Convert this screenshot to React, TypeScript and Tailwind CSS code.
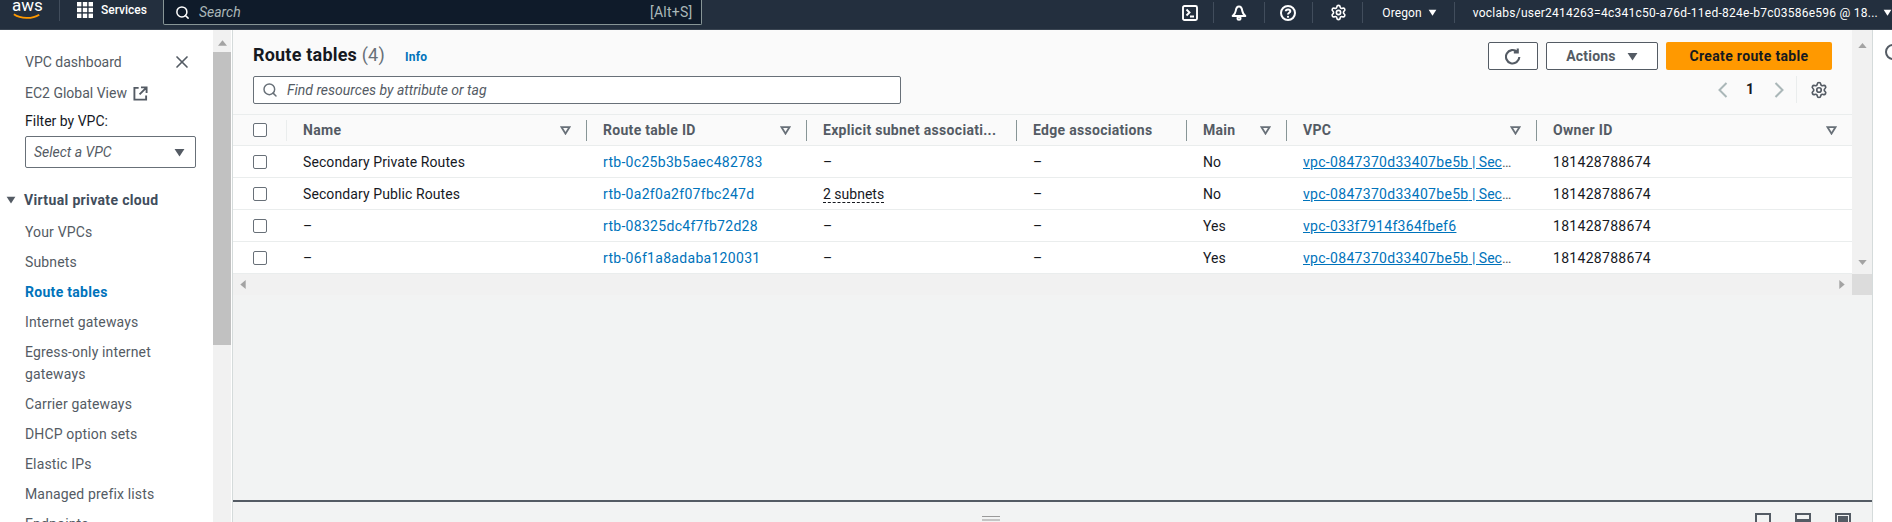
import React from "react";
import { Search, X, Settings } from "lucide-react";

const Caret = ({ className = "" }: { className?: string }) => (
  <svg viewBox="0 0 12 10" className={className} fill="currentColor"><path d="M0.5 1h11L6 9.5z" /></svg>
);
const SortIcon = () => (
  <svg viewBox="0 0 12 10" className="w-[11px] h-[9px] text-[#687078] shrink-0" fill="none" stroke="currentColor" strokeWidth="2"><path d="M1.5 1.2h9L6 8.5z" /></svg>
);
const Sep = () => <div className="w-px h-[21px] bg-[#414d5c]" />;
const Check = () => <div className="w-[14px] h-[14px] rounded-[2px] border border-[#687078] bg-white" />;

const cols = [
  { name: "Name", sort: true },
  { name: "Route table ID", sort: true },
  { name: "Explicit subnet associati...", sort: false },
  { name: "Edge associations", sort: false },
  { name: "Main", sort: true },
  { name: "VPC", sort: true },
  { name: "Owner ID", sort: true },
];
const vpcA = "vpc-0847370d33407be5b";
const rows = [
  { name: "Secondary Private Routes", id: "rtb-0c25b3b5aec482783", sub: "–", main: "No", vpc: vpcA, more: true },
  { name: "Secondary Public Routes", id: "rtb-0a2f0a2f07fbc247d", sub: "2 subnets", main: "No", vpc: vpcA, more: true },
  { name: "–", id: "rtb-08325dc4f7fb72d28", sub: "–", main: "Yes", vpc: "vpc-033f7914f364fbef6", more: false },
  { name: "–", id: "rtb-06f1a8adaba120031", sub: "–", main: "Yes", vpc: vpcA, more: true },
];
const grid = "grid grid-cols-[54px_300px_220px_210px_170px_100px_250px_315px]";
const cell = "pl-[16px] pt-[2px]";
const navItems = ["Your VPCs", "Subnets", "Route tables", "Internet gateways", "Egress-only internet gateways", "Carrier gateways", "DHCP option sets", "Elastic IPs", "Managed prefix lists", "Endpoints"];

export default function App() {
  return (
    <div className="w-[1892px] h-[522px] overflow-hidden flex flex-col bg-[#f2f3f3] text-[14px] text-[#16191f] font-['Roboto',sans-serif]">
      {/* Top bar */}
      <header className="h-[30px] shrink-0 bg-[#232f3e] border-b border-[#3a4552] flex items-start text-white text-[12px]">
        <div className="w-[59px] h-[22px] relative overflow-hidden shrink-0">
          <span className="absolute left-[12px] top-[-5px] text-[17px] leading-[20px] font-normal">aws</span>
          <svg viewBox="0 0 32 8" className="absolute left-[11px] top-[13px] w-[32px] h-[7px]" fill="none"><path d="M1 1.5C9 7 22 7 30 2" stroke="#ff9900" strokeWidth="2" /></svg>
        </div>
        <div className="w-px h-[21px] bg-[#414d5c]" />
        <svg viewBox="0 0 16 16" className="w-[16px] h-[16px] ml-[17px] mt-[2px] shrink-0" fill="#fff">
          <rect x="0" y="0" width="4.4" height="4.4" /><rect x="5.8" y="0" width="4.4" height="4.4" /><rect x="11.6" y="0" width="4.4" height="4.4" />
          <rect x="0" y="5.8" width="4.4" height="4.4" /><rect x="5.8" y="5.8" width="4.4" height="4.4" /><rect x="11.6" y="5.8" width="4.4" height="4.4" />
          <rect x="0" y="11.6" width="4.4" height="4.4" /><rect x="5.8" y="11.6" width="4.4" height="4.4" /><rect x="11.6" y="11.6" width="4.4" height="4.4" />
        </svg>
        <span className="ml-[8px] w-[62px] leading-[20px] font-medium">Services</span>
        <div className="w-[540px] h-[25px] bg-[#0f1b2a] border border-t-0 border-[#879596] rounded-b-[2px] flex items-center pl-[11px] pr-[9px] text-[#aab7b8]">
          <Search size={15} strokeWidth={2.4} className="text-white shrink-0" />
          <span className="ml-[9px] italic text-[14px] flex-1">Search</span>
          <span className="text-[14px] tracking-[0.2px]">[Alt+S]</span>
        </div>
        <div className="ml-[480px] mt-[2px] flex items-center h-[21px]">
          <svg viewBox="0 0 16 16" className="w-[16px] h-[16px] shrink-0" fill="none" stroke="#fff" strokeWidth="1.9"><rect x="1" y="1" width="14" height="14" rx="1.5" /><path d="M4.5 4.5 7.5 7.5l-3 3M8 11.5H12" /></svg>
          <div className="ml-[15px]"><Sep /></div>
          <svg viewBox="0 0 16 16" className="w-[16px] h-[16px] ml-[17px] shrink-0" fill="none" stroke="#fff" strokeWidth="2"><path d="M8 1.5c2.5 0 3 2.2 3.3 4.5.2 1.8 1.5 3.5 3 5H1.7c1.5-1.5 2.8-3.2 3-5C5 3.700 5.500 1.500 8 1.500z" strokeLinejoin="round" /><circle cx="8" cy="13.300" r="1.500" /></svg>
          <div className="ml-[17px]"><Sep /></div>
          <svg viewBox="0 0 16 16" className="w-[16px] h-[16px] ml-[15px] shrink-0" fill="none" stroke="#fff" strokeWidth="2"><circle cx="8" cy="8" r="7" /><path d="M5.800 6.200C5.800 3.800 10.300 3.800 10.300 6.200c0 1.600-2.300 1.600-2.300 3.300" /><circle cx="8" cy="11.800" r="1.100" fill="#fff" stroke="none" /></svg>
          <div className="ml-[16px]"><Sep /></div>
          <Settings size={17} strokeWidth={2.3} className="ml-[17px] shrink-0" />
          <div className="ml-[15px]"><Sep /></div>
          <span className="ml-[19px] tracking-[0.1px]">Oregon</span>
          <Caret className="w-[9px] h-[7px] ml-[6px] shrink-0" />
          <div className="ml-[17px]"><Sep /></div>
          <span className="ml-[18px] whitespace-nowrap tracking-[0.25px]">voclabs/user2414263=4c341c50-a76d-11ed-824e-b7c03586e596 @ 18...</span>
          <Caret className="w-[9px] h-[7px] ml-[5px] shrink-0" />
        </div>
      </header>

      <div className="flex-1 min-h-0 flex">
        {/* Side nav */}
        <nav className="w-[213px] shrink-0 bg-white overflow-hidden pl-[25px] pt-[20px] text-[#545b64]">
          <div className="flex items-center h-[24px] pr-[21px] justify-between">
            <span>VPC dashboard</span>
            <X size={20} strokeWidth={2} className="text-[#545b64]" />
          </div>
          <div className="flex items-center h-[24px] mt-[7px]">
            <span>EC2 Global View</span>
            <svg viewBox="0 0 16 16" className="w-[15px] h-[15px] ml-[6px]" fill="none" stroke="currentColor" strokeWidth="2"><path d="M6 2H1.500v12.500H14V10M8.500 1.500h6v6M14.500 1.500 7 9" /></svg>
          </div>
          <div className="h-[24px] mt-[4px] leading-[24px] text-[#16191f]">Filter by VPC:</div>
          <div className="mt-[3px] w-[171px] h-[32px] rounded-[2px] border border-[#687078] flex items-center justify-between pl-[8px] pr-[10px]">
            <span className="italic">Select a VPC</span>
            <Caret className="w-[11px] h-[9px]" />
          </div>
          <div className="-ml-[19px] mt-[20px] h-[24px] flex items-center font-bold text-[#414d5c] tracking-[0.35px]">
            <Caret className="w-[10px] h-[8px] mr-[8px] text-[#545b64]" />
            <span>Virtual private cloud</span>
          </div>
          <ul className="mt-[5px] tracking-[0.15px]">
            {navItems.map((n) => (
              <li key={n} className={`leading-[22px] py-[4px] w-[165px] ${n === "Route tables" ? "font-bold text-[#0073bb] tracking-[0.3px]" : ""}`}>{n}</li>
            ))}
          </ul>
        </nav>
        <div className="w-[18px] shrink-0 bg-[#f1f1f1] flex flex-col items-center">
          <svg viewBox="0 0 10 6" className="w-[9px] h-[6px] mt-[10px] text-[#a3a3a3]" fill="currentColor"><path d="M5 0l5 6H0z" /></svg>
          <div className="w-full h-[293px] mt-[6px] bg-[#c1c1c1]" />
        </div>
        <div className="w-px shrink-0 bg-white" />

        {/* Main */}
        <main className="w-[1640px] shrink-0 flex flex-col border-l border-[#d5dbdb]">
          <div className="h-[244px] flex shrink-0">
            <div className="w-[1619px] shrink-0 bg-white">
              <div className="h-[84px] bg-[#fafafa] flex justify-between pl-[20px] pr-[20px] pt-[12px]">
                <div>
                  <div className="flex items-center h-[24px]">
                    <h1 className="text-[18px] font-bold text-[#16191f] tracking-[0.2px]">Route tables <span className="font-normal text-[#687078]">(4)</span></h1>
                    <span className="ml-[20px] mt-[6px] text-[12px] font-bold text-[#0073bb] tracking-[0.3px]">Info</span>
                  </div>
                  <div className="mt-[10px] w-[648px] h-[28px] border border-[#687078] rounded-[2px] bg-white flex items-center pl-[8px] text-[#545b64]">
                    <Search size={16} strokeWidth={2.2} className="text-[#687078]" />
                    <span className="ml-[9px] italic text-[#545b64]">Find resources by attribute or tag</span>
                  </div>
                </div>
                <div className="flex flex-col items-end">
                  <div className="flex gap-[8px] h-[28px]">
                    <div className="w-[50px] border border-[#545b64] rounded-[2px] bg-white flex items-center justify-center">
                      <svg viewBox="0 0 16 16" className="w-[17px] h-[17px] text-[#545b64]" fill="none" stroke="currentColor" strokeWidth="2"><path d="M13.500 8.500a6.300 6.300 0 1 1-2-4.900M12 0.500V4.200H8.300" /></svg>
                    </div>
                    <div className="w-[112px] border border-[#545b64] rounded-[2px] bg-white flex items-center justify-center font-bold text-[#545b64] tracking-[0.2px]">
                      Actions<Caret className="w-[11px] h-[9px] ml-[11px]" />
                    </div>
                    <div className="w-[166px] rounded-[2px] bg-[#ff9900] flex items-center justify-center font-bold text-[#16191f] tracking-[0.35px]">Create route table</div>
                  </div>
                  <div className="flex items-center h-[27px] mt-[6px]">
                    <svg viewBox="0 0 10 16" className="w-[10px] h-[16px] text-[#aab7b8]" fill="none" stroke="currentColor" strokeWidth="2"><path d="M8.500 1 1.500 8l7 7" /></svg>
                    <span className="ml-[18px] font-bold text-[#16191f] w-[8px] text-center">1</span>
                    <svg viewBox="0 0 10 16" className="w-[10px] h-[16px] ml-[20px] text-[#aab7b8]" fill="none" stroke="currentColor" strokeWidth="2"><path d="M1.500 1l7 7-7 7" /></svg>
                    <div className="w-px h-[27px] bg-[#eaeded] ml-[12px]" />
                    <Settings size={18} strokeWidth={2.2} className="ml-[13px] mr-[4px] text-[#545b64]" />
                  </div>
                </div>
              </div>
              <div className={`${grid} h-[30px] bg-[#fafafa] border-y border-[#eaeded] items-center font-bold text-[#545b64] box-content tracking-[0.3px]`}>
                <div className="flex items-center h-[21px] pl-[20px] border-r border-[#eaeded]"><Check /></div>
                {cols.map((c, i) => (
                  <div key={c.name} className={`flex items-center justify-between h-[21px] pl-[16px] pr-[15px] ${i < cols.length - 1 ? "border-r border-[#879596]" : ""}`}>
                    <span className="whitespace-nowrap">{c.name}</span>
                    {c.sort && <SortIcon />}
                  </div>
                ))}
              </div>
              {rows.map((r) => (
                <div key={r.id} className={`${grid} h-[32px] border-b border-[#eaeded] items-center bg-white`}>
                  <div className="pl-[20px]"><Check /></div>
                  <div className={`${cell} tracking-[0.1px]`}>{r.name}</div>
                  <div className={`${cell} text-[#0073bb] tracking-[0.3px]`}>{r.id}</div>
                  <div className={cell}>
                    {r.sub === "–" ? r.sub : <span className="border-b border-dashed border-[#16191f]">{r.sub}</span>}
                  </div>
                  <div className={cell}>–</div>
                  <div className={cell}>{r.main}</div>
                  <div className={`${cell} whitespace-nowrap`}>
                    <span className="text-[#0073bb] underline"><span className="tracking-[0.3px]">{r.vpc}</span>{r.more && " | Sec"}</span>
                    {r.more && <span className="text-[#545b64]">…</span>}
                  </div>
                  <div className={`${cell} tracking-[0.3px]`}>181428788674</div>
                </div>
              ))}
            </div>
            <div className="w-[20px] shrink-0 bg-[#f1f1f1] flex flex-col items-center justify-between pt-[13px] pb-[9px]">
              <svg viewBox="0 0 10 6" className="w-[9px] h-[5px] text-[#a3a3a3]" fill="currentColor"><path d="M5 0l5 6H0z" /></svg>
              <svg viewBox="0 0 10 6" className="w-[9px] h-[5px] text-[#a3a3a3]" fill="currentColor"><path d="M5 6L10 0H0z" /></svg>
            </div>
          </div>
          <div className="h-[21px] shrink-0 flex bg-[#f1f1f1]">
            <div className="w-[1619px] shrink-0 flex items-center justify-between px-[7px]">
              <svg viewBox="0 0 6 10" className="w-[6px] h-[9px] text-[#a3a3a3]" fill="currentColor"><path d="M0 5l6-5v10z" /></svg>
              <svg viewBox="0 0 6 10" className="w-[6px] h-[9px] text-[#a3a3a3]" fill="currentColor"><path d="M6 5L0 0v10z" /></svg>
            </div>
            <div className="w-[20px] bg-[#dcdcdc]" />
          </div>
          <div className="flex-1" />
          <div className="h-[22px] shrink-0 border-t-2 border-[#545b64] flex items-start relative">
            <div className="absolute left-[749px] top-[14px] w-[18px]">
              <div className="h-px bg-[#9a9a9a]" />
              <div className="h-[2px] bg-[#c4c4c4] mt-[2px]" />
            </div>
            <div className="ml-[1522px] mt-[11px] flex gap-[24px]">
              <div className="w-[16px] h-[16px] border-2 border-[#545b64] relative"><div className="absolute left-0 right-0 top-[8px] h-[4px] bg-[#545b64]" /></div>
              <div className="w-[16px] h-[16px] border-2 border-[#545b64] relative"><div className="absolute left-0 right-0 top-[4px] h-[8px] bg-[#545b64]" /></div>
              <div className="w-[16px] h-[16px] border-2 border-[#545b64] relative"><div className="absolute left-[1px] right-[1px] top-[1px] h-[10px] bg-[#545b64]" /></div>
            </div>
          </div>
        </main>

        {/* Right panel */}
        <aside className="flex-1 bg-white border-l border-[#d5dbdb] overflow-hidden pl-[12px] pt-[14px]">
          <svg viewBox="0 0 16 16" className="w-[16px] h-[16px] text-[#545b64]" fill="none" stroke="currentColor" strokeWidth="2"><circle cx="8" cy="8" r="7" /><path d="M8 7v5M8 3.500v2" /></svg>
        </aside>
      </div>
    </div>
  );
}
